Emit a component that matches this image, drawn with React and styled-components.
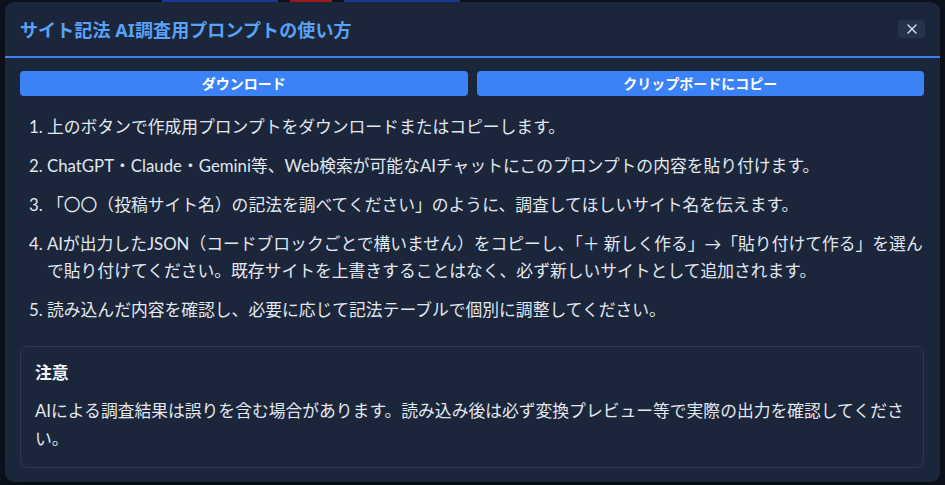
import React from 'react';
import styled, { createGlobalStyle } from 'styled-components';

const GlobalStyle = createGlobalStyle`
  html, body {
    margin: 0;
    padding: 0;
    background: #0e1420;
    height: 100%;
    overflow: hidden;
  }
  body {
    font-family: "Noto Sans", "Noto Sans CJK JP", sans-serif;
  }
`;

const textFont = `Lato, "Noto Sans CJK JP", sans-serif`;

const Page = styled.div`
  position: relative;
  width: 945px;
  height: 485px;
  background: #0e1420;
  overflow: hidden;
`;

const TopBar = styled.div`
  display: flex;
  gap: 12px;
  padding-left: 162px;
  height: 3px;
`;

const BarChip = styled.span`
  display: block;
  width: ${p => p.w}px;
  height: 3px;
  background: ${p => p.color};
`;

const Overlay = styled.div`
  position: absolute;
  inset: 0;
  padding: 2px 5px 3px 5px;
  display: flex;
`;

const Modal = styled.section`
  flex: 1;
  background: #1b263b;
  border-radius: 9px;
  display: flex;
  flex-direction: column;
  overflow: hidden;
  box-shadow: 0 8px 30px rgba(0, 0, 0, 0.5);
`;

const Header = styled.header`
  display: flex;
  align-items: center;
  justify-content: space-between;
  height: 54px;
  padding: 0 15px 0 15px;
  border-bottom: 2px solid #3b82f6;
`;

const Title = styled.h2`
  margin: 0;
  font-size: 18px;
  font-weight: 700;
  color: #5aa2f5;
  letter-spacing: 0.1px;
`;

const CloseButton = styled.button`
  width: 27px;
  height: 18px;
  display: flex;
  align-items: center;
  justify-content: center;
  border: none;
  border-radius: 4px;
  background: #253249;
  color: #d1d8e2;
  padding: 0;
  cursor: pointer;
`;

const Body = styled.div`
  padding: 13px 16px 0 15px;
  color: #e2e8f0;
`;

const ButtonRow = styled.div`
  display: grid;
  grid-template-columns: 1fr 1fr;
  gap: 9px;
`;

const ActionButton = styled.button`
  height: 25px;
  border: none;
  border-radius: 4px;
  background: #3b82f6;
  color: #ffffff;
  font-family: "Noto Sans", "Noto Sans CJK JP", sans-serif;
  font-size: 14px;
  font-weight: 700;
  line-height: 25px;
  padding: 0;
  cursor: pointer;
`;

const Steps = styled.ol`
  margin: 17px 0 0 0;
  padding-left: 27px;
  font-family: ${textFont};
  font-size: 16.8px;
  line-height: 27px;
  color: #e2e8f0;

  li {
    margin-bottom: 12px;
  }
  li:last-child {
    margin-bottom: 0;
  }
`;

const Note = styled.div`
  margin-top: 23px;
  border: 1px solid #2c3950;
  border-radius: 8px;
  padding: 14px;
`;

const NoteTitle = styled.div`
  font-family: ${textFont};
  font-size: 16.8px;
  font-weight: 700;
  line-height: 24px;
  color: #f1f5f9;
  margin-bottom: 12px;
`;

const NoteText = styled.p`
  margin: 0;
  font-family: ${textFont};
  font-size: 16.8px;
  line-height: 28px;
  color: #e2e8f0;
`;

const steps = [
  '上のボタンで作成用プロンプトをダウンロードまたはコピーします。',
  'ChatGPT・Claude・Gemini等、Web検索が可能なAIチャットにこのプロンプトの内容を貼り付けます。',
  '「〇〇（投稿サイト名）の記法を調べてください」のように、調査してほしいサイト名を伝えます。',
  'AIが出力したJSON（コードブロックごとで構いません）をコピーし、「＋ 新しく作る」→「貼り付けて作る」を選んで貼り付けてください。既存サイトを上書きすることはなく、必ず新しいサイトとして追加されます。',
  '読み込んだ内容を確認し、必要に応じて記法テーブルで個別に調整してください。',
];

const App = () => {
  return (
    <Page>
      <GlobalStyle />
      <TopBar>
        <BarChip w={116} color="#1e40af" />
        <BarChip w={42} color="#b91c1c" />
        <BarChip w={116} color="#1e40af" />
      </TopBar>
      <Overlay>
        <Modal>
          <Header>
            <Title>サイト記法 AI調査用プロンプトの使い方</Title>
            <CloseButton aria-label="閉じる">
              <svg width="12" height="12" viewBox="0 0 12 12" fill="none" stroke="currentColor" strokeWidth="1.5" strokeLinecap="round">
                <path d="M2 2 L10 10 M10 2 L2 10" />
              </svg>
            </CloseButton>
          </Header>
          <Body>
            <ButtonRow>
              <ActionButton>ダウンロード</ActionButton>
              <ActionButton>クリップボードにコピー</ActionButton>
            </ButtonRow>
            <Steps>
              {steps.map((s, idx) => (
                <li key={idx}>{s}</li>
              ))}
            </Steps>
            <Note>
              <NoteTitle>注意</NoteTitle>
              <NoteText>
                AIによる調査結果は誤りを含む場合があります。読み込み後は必ず変換プレビュー等で実際の出力を確認してください。
              </NoteText>
            </Note>
          </Body>
        </Modal>
      </Overlay>
    </Page>
  );
};

export default App;
